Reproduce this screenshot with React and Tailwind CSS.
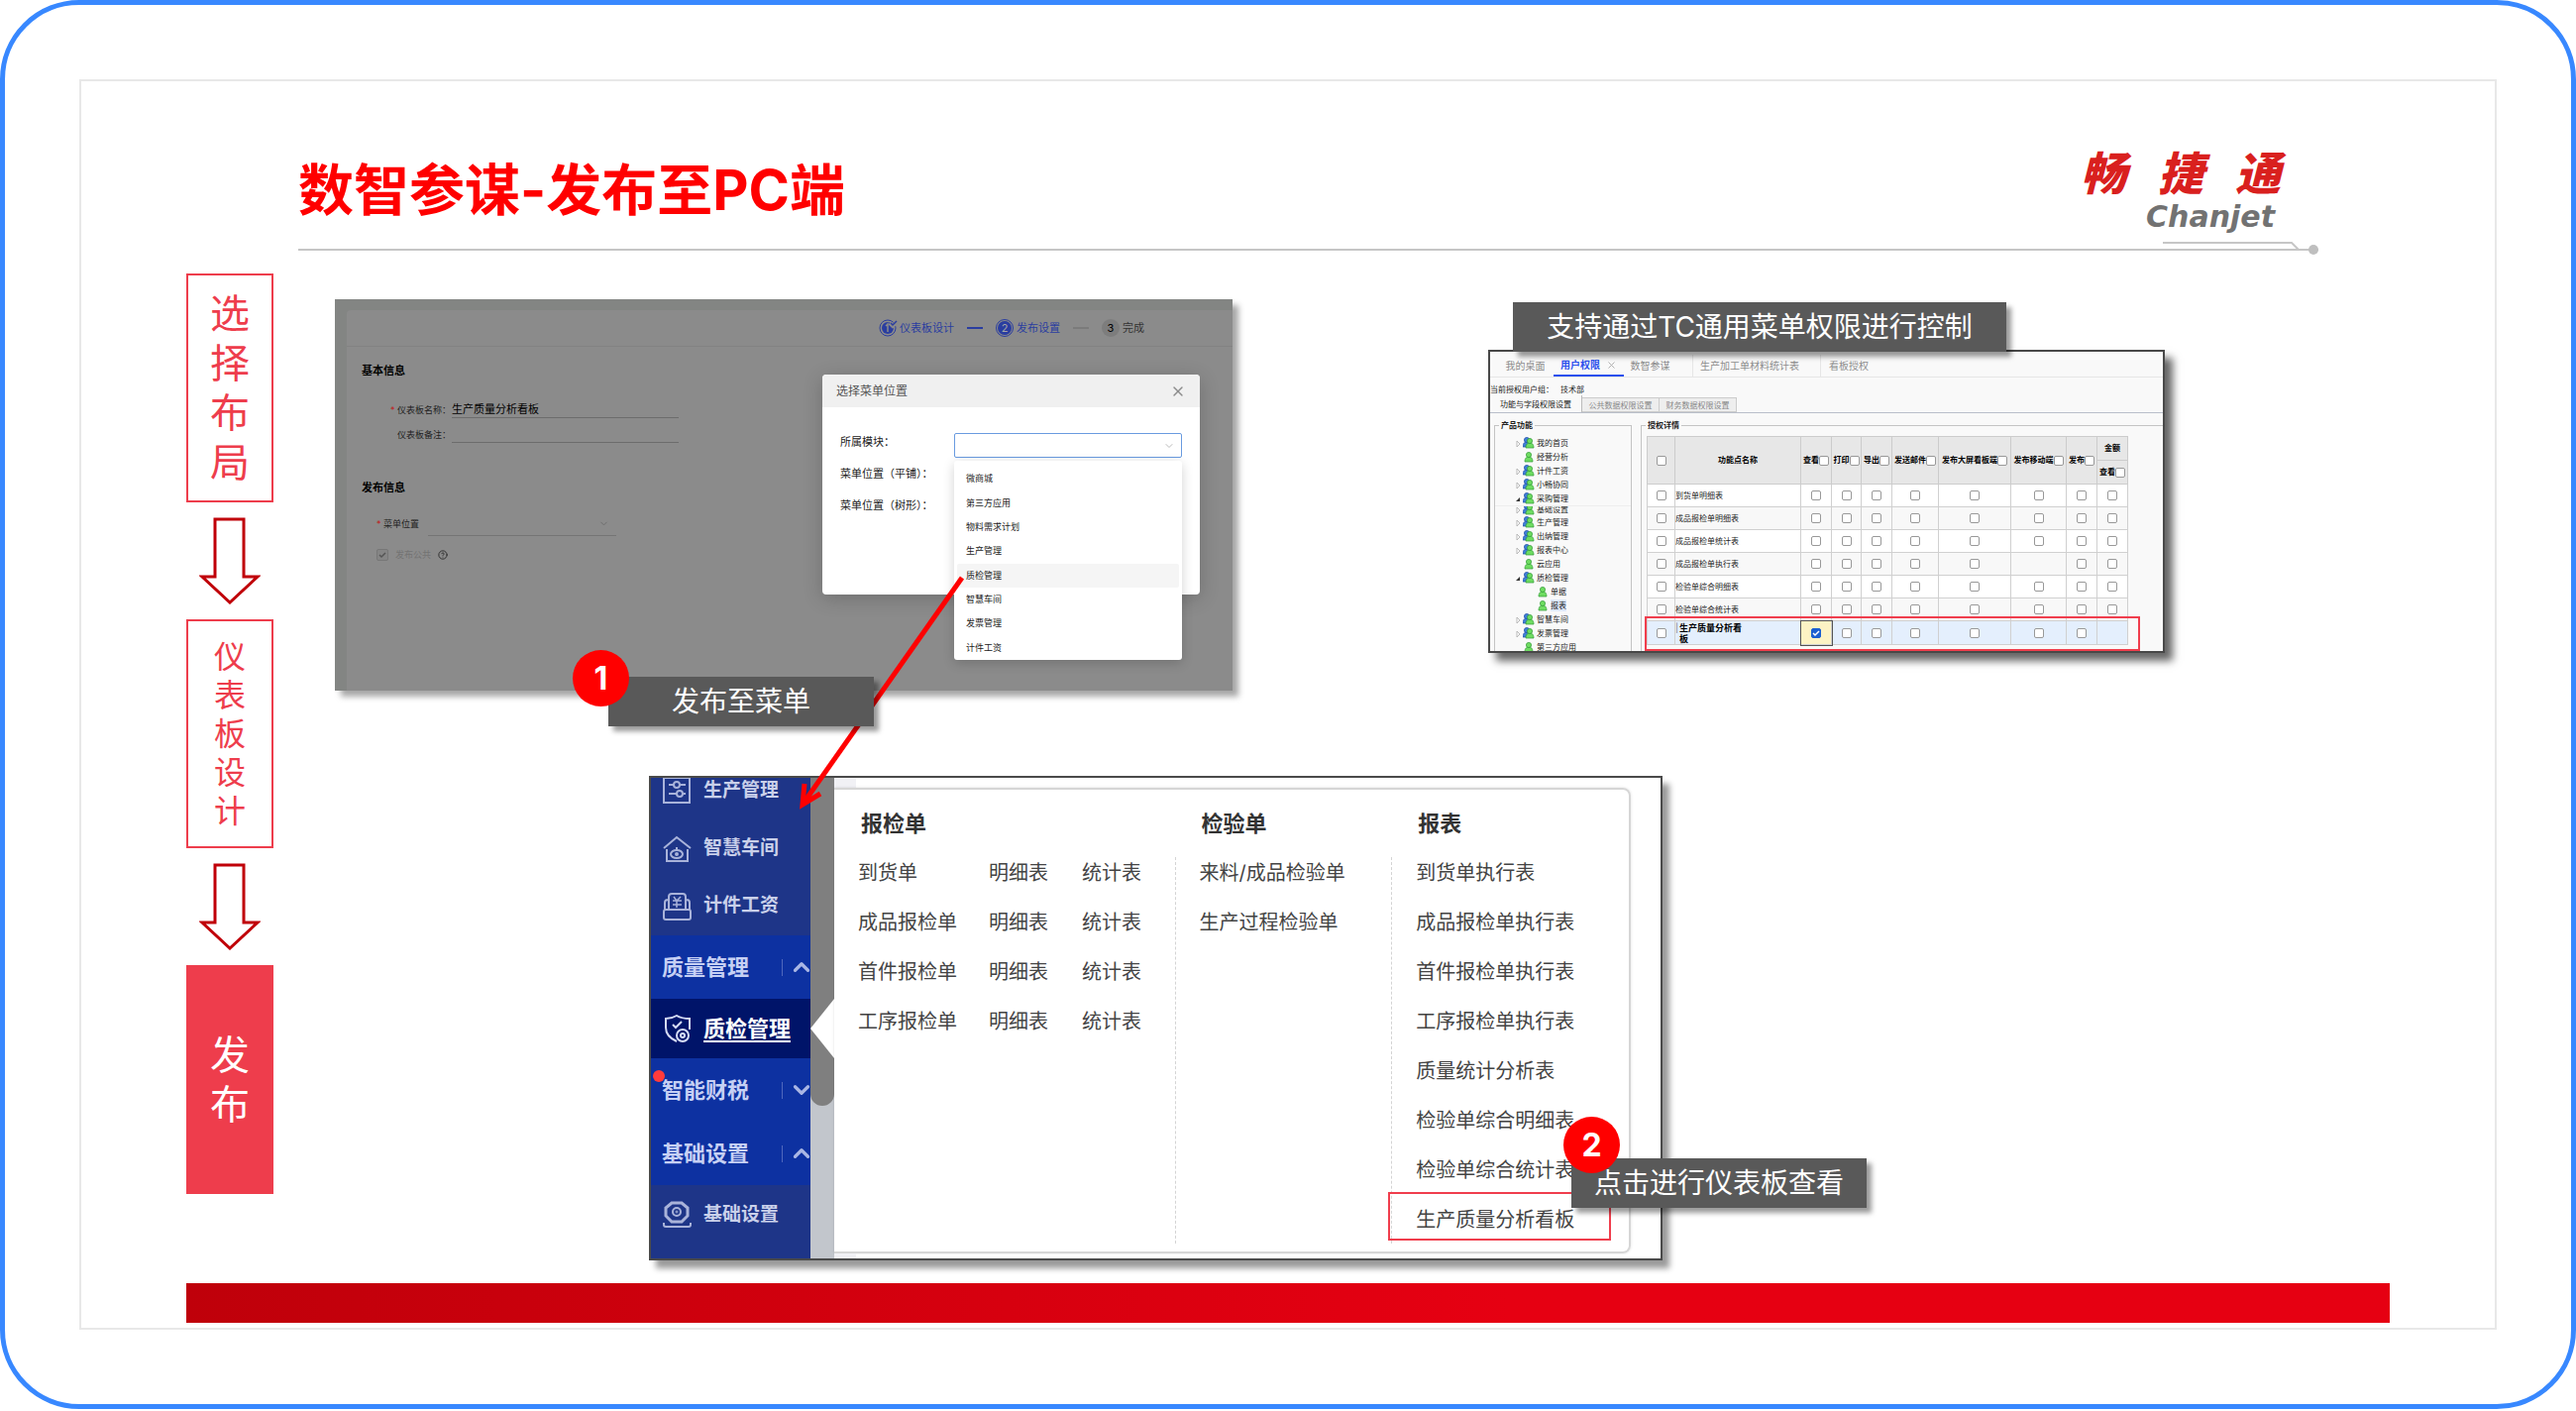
import { ChevronDown, ChevronUp, CircleHelp, X } from 'lucide-react';

const moduleOptions = ['微商城', '第三方应用', '物料需求计划', '生产管理', '质检管理', '智慧车间', '发票管理', '计件工资'];

const treeTop = [
    { label: '我的首页', kind: 'group' },
    { label: '经营分析', kind: 'leaf' },
    { label: '计件工资', kind: 'group' },
    { label: '小畅协同', kind: 'group' },
    { label: '采购管理', kind: 'open' },
];

const treeBottom = [
    { label: '生产管理', kind: 'group' },
    { label: '出纳管理', kind: 'group' },
    { label: '报表中心', kind: 'group' },
    { label: '云应用', kind: 'leaf' },
    { label: '质检管理', kind: 'open' },
    { label: '单据', kind: 'child' },
    { label: '报表', kind: 'child', selected: true },
    { label: '智慧车间', kind: 'group' },
    { label: '发票管理', kind: 'group' },
    { label: '第三方应用', kind: 'leaf' },
];

const permissionColumns = ['查看', '打印', '导出', '发送邮件', '发布大屏看板端', '发布移动端', '发布'];

const permissionRows = [
    { name: '到货单明细表' },
    { name: '成品报检单明细表' },
    { name: '成品报检单统计表' },
    { name: '成品报检单执行表', missing: 5 },
    { name: '检验单综合明细表' },
    { name: '检验单综合统计表' },
];

const inspectionForms = ['到货单', '成品报检单', '首件报检单', '工序报检单'];
const checkForms = ['来料/成品检验单', '生产过程检验单'];
const reports = [
    '到货单执行表',
    '成品报检单执行表',
    '首件报检单执行表',
    '工序报检单执行表',
    '质量统计分析表',
    '检验单综合明细表',
    '检验单综合统计表',
    '生产质量分析看板',
];

function Logo() {
    return (
        <div className="flex flex-col items-end">
            <div className="flex gap-[32px] text-[46px] leading-[54px] font-black text-[#d9201e] italic">
                <span>畅</span>
                <span>捷</span>
                <span>通</span>
            </div>
            <div className="mr-[6px] font-['DejaVu_Sans',sans-serif] text-[30px] leading-[34px] font-bold text-[#727272] italic">
                Chanjet
            </div>
        </div>
    );
}

function Header() {
    return (
        <header className="mr-[72px] ml-[113px] pt-[66px]">
            <div className="flex h-[103px] items-start justify-between">
                <h1 className="mt-[14px] text-[56px] leading-[60px] font-bold text-[#ff0000]">数智参谋-发布至PC端</h1>
                <div className="mr-[38px]">
                    <Logo />
                </div>
            </div>
            <div className="relative h-[2px] bg-[#c6c6c6]">
                <svg className="absolute right-0 -bottom-[4px]" width="160" height="14" viewBox="0 0 160 14" fill="none">
                    <path d="M3 2H133L140 9" stroke="#c6c6c6" strokeWidth="2" />
                    <circle cx="155" cy="9" r="5" fill="#bfbfbf" />
                </svg>
            </div>
        </header>
    );
}

function StepArrow() {
    return (
        <svg className="my-[15px] h-[88px] w-[62px] self-center" viewBox="0 0 62 88" fill="none">
            <path d="M16 2H45V60H59L31 86L3 60H16Z" stroke="#c00008" strokeWidth="3" />
        </svg>
    );
}

function StepBox({ text, className }) {
    return (
        <div className={`flex h-[231px] flex-col items-center justify-center ${className}`}>
            {text.split('').map((ch) => (
                <span key={ch}>{ch}</span>
            ))}
        </div>
    );
}

function Steps() {
    return (
        <nav className="flex w-[88px] shrink-0 flex-col" aria-label="步骤">
            <StepBox text="选择布局" className="border-2 border-[#ee3d4c] text-[40px] leading-[50px] text-[#ee3d4c]" />
            <StepArrow />
            <StepBox text="仪表板设计" className="border-2 border-[#ee3d4c] text-[32px] leading-[39px] text-[#ee3d4c]" />
            <StepArrow />
            <StepBox text="发布" className="bg-[#ee3d4c] text-[40px] leading-[50px] text-white" />
        </nav>
    );
}

function Callout({ children, className }) {
    return (
        <div
            className={`absolute z-20 flex h-[50px] items-center justify-center bg-[#595959] text-[28px] leading-[40px] whitespace-nowrap text-white shadow-[5px_5px_5px_rgba(0,0,0,0.4)] ${className}`}>
            {children}
        </div>
    );
}

function Badge({ number, className }) {
    return (
        <span
            className={`absolute flex h-[57px] w-[57px] items-center justify-center rounded-full bg-[#ff0000] text-[32px] font-bold ${className}`}>
            {number}
        </span>
    );
}

function ModulePicker() {
    return (
        <div className="absolute top-[76px] left-[492px] h-[222px] w-[381px] rounded-[4px] bg-white text-[11px] leading-[16px] text-[#222] shadow-[0_4px_20px_rgba(0,0,0,0.2)]">
            <div className="flex h-[33px] items-center justify-between rounded-t-[4px] bg-[#f0f0f0] px-[14px]">
                <h3 className="text-[12px] text-[#555]">选择菜单位置</h3>
                <button type="button" aria-label="关闭" className="text-[#8a8a8a]">
                    <X size={16} strokeWidth={2} />
                </button>
            </div>
            <div className="flex flex-col gap-4 px-[18px] pt-[27px]">
                <label htmlFor="module">所属模块：</label>
                <span>菜单位置（平铺）：</span>
                <span>菜单位置（树形）：</span>
            </div>
            <div className="absolute top-[59px] left-[133px] w-[230px]">
                <select
                    id="module"
                    className="block h-[25px] w-full appearance-none rounded-[2px] border border-[#6a9be0] bg-white outline-none"
                />
                <ChevronDown size={12} strokeWidth={2} className="absolute top-[7px] right-[7px] text-[#bbb]" />
                <ul className="mt-[3px] flex h-[201px] flex-col rounded-[3px] bg-white px-[3px] pt-[6px] text-[9px] shadow-[0_3px_12px_rgba(0,0,0,0.18)]">
                    {moduleOptions.map((option) => (
                        <li
                            key={option}
                            className={`flex flex-1 items-center rounded-[2px] px-[9px] ${option === '质检管理' ? 'bg-[#f5f5f5]' : ''}`}>
                            {option}
                        </li>
                    ))}
                </ul>
            </div>
        </div>
    );
}

function PublishPanel() {
    return (
        <section className="relative h-[395px]">
            <div className="h-full bg-[#838583] pt-[11px] pl-[12px] shadow-[6px_6px_6px_rgba(0,0,0,0.35)]">
                <div className="h-full rounded-tl-[4px] bg-[#8b8b8b] text-[9px] text-[#222]">
                    <ol className="flex h-[37px] items-center border-b border-[#828282] pl-[537px] text-[11px] text-[#2a3da0]">
                        <li className="flex items-center gap-px">
                            <svg width="20" height="18" viewBox="0 0 20 18" fill="none">
                                <circle cx="9" cy="9" r="8" stroke="#2a3da0" />
                                <circle cx="9" cy="9" r="6" fill="#2a3da0" />
                                <path d="M7 7L9 5V13" stroke="#8b8b8b" strokeWidth="1.5" />
                                <path d="M11 4L14 7L19 2" stroke="#8b8b8b" strokeWidth="4" />
                                <path d="M12 4L14 6L18 2" stroke="#2a3da0" strokeWidth="1.5" />
                            </svg>
                            仪表板设计
                        </li>
                        <li aria-hidden="true" className="mx-[13px] h-[2px] w-[16px] bg-[#2a3da0]" />
                        <li className="flex items-center gap-[3px]">
                            <span className="flex h-[18px] w-[18px] items-center justify-center rounded-full border border-[#2a3da0] p-px">
                                <span className="flex h-full w-full items-center justify-center rounded-full bg-[#2a3da0] text-[#a5a5a5]">2</span>
                            </span>
                            发布设置
                        </li>
                        <li aria-hidden="true" className="mx-[13px] h-[2px] w-[16px] bg-[#7b7b7b]" />
                        <li className="flex items-center gap-[3px] text-[#333]">
                            <span className="flex h-[18px] w-[18px] items-center justify-center rounded-full bg-[#7d7d7d] text-black">3</span>
                            完成
                        </li>
                    </ol>

                    <h2 className="mt-[16px] ml-[15px] text-[11px] leading-[16px] font-bold text-black">基本信息</h2>
                    <div className="mt-[21px] flex h-[19px] items-center">
                        <label htmlFor="board-name" className="w-[106px] pt-[2px] pr-[1px] text-right">
                            <span className="text-[#c01818]">* </span>仪表板名称：
                        </label>
                        <input
                            id="board-name"
                            type="text"
                            defaultValue="生产质量分析看板"
                            className="h-full w-[229px] border-b border-[#6c6c6c] bg-transparent text-[11px] text-black outline-none"
                        />
                    </div>
                    <div className="mt-[6px] flex h-[19px] items-center">
                        <label htmlFor="board-note" className="w-[106px] pt-[2px] pr-[1px] text-right">
                            仪表板备注：
                        </label>
                        <input
                            id="board-note"
                            type="text"
                            className="h-full w-[229px] border-b border-[#6c6c6c] bg-transparent text-[11px] outline-none"
                        />
                    </div>

                    <h2 className="mt-[37px] ml-[15px] text-[11px] leading-[16px] font-bold text-black">发布信息</h2>
                    <div className="mt-[16px] ml-[30px] flex h-[25px] items-center">
                        <label htmlFor="menu-place" className="w-[52px]">
                            <span className="text-[#c01818]">* </span>菜单位置
                        </label>
                        <div className="relative h-full w-[190px]">
                            <select id="menu-place" className="h-full w-full appearance-none border-b border-[#757575] outline-none" />
                            <ChevronDown size={11} className="absolute top-[7px] right-[7px] text-[#6c6c6c]" />
                        </div>
                    </div>
                    <div className="mt-[11px] ml-[30px] flex h-[16px] items-center gap-[7px] text-[#737373]">
                        <span className="relative flex">
                            <input
                                id="publish-public"
                                type="checkbox"
                                defaultChecked
                                disabled
                                className="h-[12px] w-[12px] appearance-none rounded-[2px] border border-[#777] bg-[#858585]"
                            />
                            <svg className="absolute inset-0" width="12" height="12" viewBox="0 0 12 12" fill="none">
                                <path d="M3 6L5 8L9 4" stroke="#555" strokeWidth="1.5" />
                            </svg>
                        </span>
                        <label htmlFor="publish-public">发布公共</label>
                        <CircleHelp size={10} strokeWidth={2} className="text-[#222]" />
                    </div>
                </div>
            </div>
            <ModulePicker />
            <Callout className="top-[381px] left-[276px] w-[268px]">
                <Badge number="1" className="-top-[27px] -left-[36px]" />
                发布至菜单
            </Callout>
        </section>
    );
}

function Person({ x, y, fill, edge }) {
    return (
        <g fill={fill} stroke={edge} strokeWidth="0.7">
            <path d={`M${x} ${y + 10}C${x} ${y + 6} ${x + 2} ${y + 5} ${x + 4} ${y + 5}S${x + 8} ${y + 6} ${x + 8} ${y + 10}Z`} />
            <circle cx={x + 4} cy={y + 3} r="2.6" />
        </g>
    );
}

function TreeRow({ label, kind, selected, className = 'h-[14px]' }) {
    const pair = kind === 'group' || kind === 'open';
    return (
        <li className={`flex items-center ${className} ${kind === 'child' ? 'pl-[35px]' : 'pl-[21px]'}`}>
            <svg width="7" height="12" viewBox="0 0 7 12" className="shrink-0">
                {kind === 'group' && <path d="M1 4L4 7L1 10Z" fill="#fff" stroke="#aaa" strokeWidth="0.8" />}
                {kind === 'open' && <path d="M4 5V9H0Z" fill="#333" />}
            </svg>
            <svg width="12" height="12" viewBox="0 0 12 12" className="mr-[2px] shrink-0">
                {pair && <Person x={0} y={0} fill="#3f7fd8" edge="#1f4fa5" />}
                <Person x={pair ? 3 : 2} y={1} fill="#6fdc62" edge="#2f9a35" />
            </svg>
            <span className={selected ? 'bg-[#dfe9fa]' : ''}>{label}</span>
        </li>
    );
}

function Tick({ label, checked }) {
    return (
        <span className="relative inline-flex align-middle">
            <input
                type="checkbox"
                aria-label={label}
                defaultChecked={checked}
                className="h-[10px] w-[10px] appearance-none rounded-[2px] border border-[#999] bg-white checked:border-[#1b5fd0] checked:bg-[#1b5fd0]"
            />
            {checked && (
                <svg className="absolute inset-0" width="10" height="10" viewBox="0 0 10 10" fill="none">
                    <path d="M2 5L4 7L8 3" stroke="#fff" strokeWidth="1.5" />
                </svg>
            )}
        </span>
    );
}

function PermissionTable() {
    return (
        <table className="w-[485px] table-fixed border-collapse text-center leading-[11px] [&_td]:border [&_td]:border-[#d0d0d0] [&_th]:border [&_th]:border-[#ccc] [&_th]:p-0 [&_th]:whitespace-nowrap">
            <colgroup>
                <col className="w-[28px]" />
                <col className="w-[127px]" />
                <col className="w-[31px]" />
                <col className="w-[30px]" />
                <col className="w-[31px]" />
                <col className="w-[47px]" />
                <col className="w-[73px]" />
                <col className="w-[56px]" />
                <col className="w-[31px]" />
                <col className="w-[31px]" />
            </colgroup>
            <thead className="bg-[#e7e7e7] text-black">
                <tr className="h-[24px]">
                    <th rowSpan={2}><Tick label="全选" /></th>
                    <th rowSpan={2}>功能点名称</th>
                    {permissionColumns.map((name) => (
                        <th key={name} rowSpan={2}>
                            {name}
                            <Tick label={name} />
                        </th>
                    ))}
                    <th>金额</th>
                </tr>
                <tr className="h-[24px]">
                    <th>查看<Tick label="金额查看" /></th>
                </tr>
            </thead>
            <tbody>
                {permissionRows.map((row) => (
                    <tr key={row.name} className="h-[23px] bg-white even:bg-[#f8f8f8]">
                        <td><Tick label={row.name} /></td>
                        <td className="text-left">{row.name}</td>
                        {permissionColumns.map((name, i) => (
                            <td key={name}>{row.missing !== i && <Tick label={`${row.name} ${name}`} />}</td>
                        ))}
                        <td><Tick label={`${row.name} 金额`} /></td>
                    </tr>
                ))}
                <tr className="h-[24px] bg-[#e4effd]">
                    <td><Tick label="生产质量分析看板" /></td>
                    <td className="text-left text-[9px] font-bold text-black">
                        <div className="flex h-[22px] items-start gap-px">
                            <span className="font-normal text-[#777]">|</span>
                            <span className="w-[68px]">生产质量分析看板</span>
                        </div>
                    </td>
                    {permissionColumns.map((name, i) => (
                        <td key={name} className={i === 0 ? 'bg-[#fdf3c4] outline outline-[#555]' : ''}>
                            <Tick label={`看板 ${name}`} checked={i === 0} />
                        </td>
                    ))}
                    <td />
                </tr>
            </tbody>
        </table>
    );
}

function PermissionPanel() {
    return (
        <section className="relative mt-[51px] h-[306px]">
            <div className="h-full overflow-hidden border-2 border-[#484848] bg-[#f9f9f9] text-[8px] leading-[12px] text-[#222] shadow-[8px_8px_8px_rgba(0,0,0,0.6)]">
                <div className="flex h-[26px] items-end border-b border-[#e6e6e6] text-[10px] text-[#8c8c8c]">
                    <button type="button" className="h-[22px] w-[64px] pl-[7px]">我的桌面</button>
                    <button
                        type="button"
                        className="flex h-[22px] w-[71px] items-center justify-between border-b-2 border-[#2b50ed] px-[7px] font-bold text-[#2b50ed]">
                        用户权限
                        <X size={11} className="text-[#aaa]" />
                    </button>
                    <button type="button" className="h-[22px] w-[70px] border-r border-[#e6e6e6] pr-[16px]">数智参谋</button>
                    <button type="button" className="h-[22px] w-[129px] border-r border-[#e6e6e6] pr-[14px]">生产加工单材料统计表</button>
                    <button type="button" className="h-[22px] pl-[8px]">看板授权</button>
                </div>
                <div className="mt-[4px] flex h-[15px] items-center gap-[7px]">
                    <span>当前授权用户组：</span>
                    <span>技术部</span>
                </div>
                <div className="flex h-[17px] items-end border-b border-[#b9bfca] text-[#888]">
                    <button type="button" className="h-[17px] w-[93px] border-r border-[#bbb] text-[#222]">功能与字段权限设置</button>
                    <button type="button" className="h-[15px] w-[78px] border border-l-0 border-[#ccc] bg-[#eee]">公共数据权限设置</button>
                    <button type="button" className="h-[15px] w-[78px] border border-l-0 border-[#ccc] bg-[#eee]">财务数据权限设置</button>
                </div>
                <div className="flex gap-[9px] pt-[6px] pl-[4px]">
                    <fieldset className="h-[260px] w-[139px] shrink-0 border border-[#c4c4c4]">
                        <legend className="ml-[4px] px-[2px] font-bold">产品功能</legend>
                        <ul className="pt-[5px]">
                            {treeTop.map((node) => (
                                <TreeRow key={node.label} {...node} />
                            ))}
                        </ul>
                        <ul className="border-t border-[#eee]">
                            <TreeRow label="基础设置" kind="group" className="h-[9px] items-end! overflow-hidden" />
                            {treeBottom.map((node) => (
                                <TreeRow key={node.label} {...node} />
                            ))}
                        </ul>
                    </fieldset>
                    <fieldset className="h-[260px] min-w-0 flex-1 border border-r-0 border-[#c4c4c4] pl-[5px]">
                        <legend className="-ml-px px-[2px] font-bold">授权详情</legend>
                        <div className="pt-[5px]">
                            <PermissionTable />
                        </div>
                    </fieldset>
                </div>
            </div>
            <div className="absolute top-[269px] left-[158px] h-[35px] w-[500px] border-2 border-[#f03e4d]" />
            <Callout className="-top-[48px] left-[25px] w-[498px]">支持通过TC通用菜单权限进行控制</Callout>
        </section>
    );
}

const navIcons = {
    sliders: (
        <>
            <rect x="1" y="1" width="26" height="25" />
            <path d="M6 8H11M17 8H23M6 17H14M20 17H23" />
            <circle cx="14" cy="8" r="3" />
            <circle cx="17" cy="17" r="3" />
        </>
    ),
    house: (
        <>
            <path d="M1 14L14 3L28 14M4 15V27H25V15" />
            <ellipse cx="14" cy="20" rx="6" ry="4" />
            <circle cx="14" cy="20" r="1" />
            <path d="M14 13V16" />
        </>
    ),
    wage: (
        <>
            <rect x="1" y="17" width="27" height="10" rx="2" />
            <path d="M2 17V10Q2 7 5 7M27 17V10Q27 7 24 7M6 17V4Q6 1 9 1H20Q23 1 23 4V17" />
            <path d="M11 4L14 8L18 4M10 8H19M10 12H19M14 8V15" strokeWidth="1.5" />
        </>
    ),
    shield: (
        <>
            <path d="M14 27Q3 22 3 13V4Q9 4 14 1Q19 4 27 4V15" />
            <path d="M10 10L13 13L19 7" />
            <circle cx="20" cy="21" r="6" />
            <circle cx="20" cy="21" r="2" />
        </>
    ),
    gear: (
        <>
            <path d="M9 2H19L25 7V15L19 21H9L3 15V7Z" strokeWidth="3" />
            <circle cx="14" cy="11" r="4" />
            <circle cx="14" cy="11" r="1" strokeWidth="1" />
            <path d="M1 22V24Q1 26 3 26H26Q28 26 28 24V22" />
        </>
    ),
};

function NavItem({ icon, label, className, active }) {
    return (
        <a href="#" className={`flex items-center gap-3 pl-[12px] ${className}`}>
            <svg width="29" height="28" viewBox="0 0 29 28" fill="none" stroke={active ? '#d5dcf5' : '#a9b3da'} strokeWidth="2" className="shrink-0">
                {navIcons[icon]}
            </svg>
            <span className={active ? 'text-[22px] font-bold whitespace-nowrap text-white underline underline-offset-4' : 'text-[19px] font-bold text-[#c9d0ea]'}>
                {label}
            </span>
        </a>
    );
}

function NavGroup({ label, open, dot }) {
    const Chevron = open ? ChevronUp : ChevronDown;
    return (
        <button type="button" className="relative flex h-[64px] w-full items-center bg-[#0d31a1] pl-[11px] text-[22px] font-bold text-[#c6d0f4]">
            {dot && <span className="absolute top-[12px] left-[2px] h-[12px] w-[12px] rounded-full bg-[#ff3b3b]" />}
            {label}
            <span className="ml-auto h-[17px] w-px bg-[#5068bd]" />
            <Chevron size={26} strokeWidth={3} className="-mr-[4px] ml-[6px] text-[#a9b6e4]" />
        </button>
    );
}

function MenuColumn({ title, children, divided }) {
    return (
        <div className="flex min-w-0 flex-col whitespace-nowrap">
            <h3 className="flex h-[68px] shrink-0 items-center pl-[27px] text-[22px] font-bold text-[#333]">{title}</h3>
            <ul className={`mb-2 flex flex-1 flex-col gap-[18px] pl-6 ${divided ? 'border-l border-dashed border-[#d4d4d4]' : ''}`}>
                {children}
            </ul>
        </div>
    );
}

function MenuPanel() {
    return (
        <section className="relative h-[489px]">
            <div className="flex h-full overflow-hidden border-2 border-[#4a4a4a] bg-white shadow-[7px_8px_6px_rgba(0,0,0,0.4)]">
                <nav className="flex w-[161px] shrink-0 flex-col bg-[#1e3588]" aria-label="主菜单">
                    <NavItem icon="sliders" label="生产管理" className="h-[42px] pb-[16px]" />
                    <NavItem icon="house" label="智慧车间" className="h-[58px]" />
                    <NavItem icon="wage" label="计件工资" className="h-[59px]" />
                    <NavGroup label="质量管理" open />
                    <NavItem icon="shield" label="质检管理" className="h-[60px] bg-[#001469]" active />
                    <NavGroup label="智能财税" dot />
                    <NavGroup label="基础设置" open />
                    <NavItem icon="gear" label="基础设置" className="h-[60px]" />
                </nav>
                <div className="w-[24px] shrink-0 bg-[#c2c6cc]">
                    <div className="flex h-[331px] items-end rounded-b-full bg-[#7f7f7f]">
                        <svg className="mb-[48px]" width="24" height="60" viewBox="0 0 24 60">
                            <path d="M24 0L0 30L24 60Z" fill="#fff" />
                        </svg>
                    </div>
                </div>
                <div className="flex min-w-0 flex-1 flex-col pr-[30px]">
                    <div className="h-[10px] w-[22px] shrink-0 bg-[#f1f1f5]" />
                    <div className="grid flex-1 grid-cols-[344fr_219fr_240fr] rounded-r-[8px] border-2 border-l-0 border-[#d6d6d6] text-[20px] leading-[32px] text-[#444] shadow-[0_0_3px_rgba(0,0,0,0.12)]">
                        <MenuColumn title="报检单">
                            {inspectionForms.map((name) => (
                                <li key={name} className="grid grid-cols-[132px_94px_auto]">
                                    <a href="#">{name}</a>
                                    <a href="#">明细表</a>
                                    <a href="#">统计表</a>
                                </li>
                            ))}
                        </MenuColumn>
                        <MenuColumn title="检验单" divided>
                            {checkForms.map((name) => (
                                <li key={name}><a href="#">{name}</a></li>
                            ))}
                        </MenuColumn>
                        <MenuColumn title="报表" divided>
                            {reports.map((name) => (
                                <li key={name} className="relative">
                                    <a href="#">{name}</a>
                                    {name === '生产质量分析看板' && (
                                        <span className="absolute -top-[12px] -bottom-[5px] -left-[28px] w-[225px] border-2 border-[#f03e4d]" />
                                    )}
                                </li>
                            ))}
                        </MenuColumn>
                    </div>
                    <div className="h-[5px] w-[22px] shrink-0 bg-[#f1f1f5]" />
                </div>
            </div>
            <Callout className="top-[386px] -right-[206px] w-[298px]">
                <Badge number="2" className="-top-[42px] -left-[8px]" />
                点击进行仪表板查看
            </Callout>
        </section>
    );
}

export default function App() {
    return (
        <div className="flex min-h-screen flex-col bg-white pb-[2px] font-['Inter','Noto_Sans_CJK_SC',sans-serif]">
            <div className="flex flex-1 flex-col rounded-[80px] border-[5px] border-[#3888ff] p-[75px]">
                <main className="flex flex-1 flex-col border-2 border-[#e8e8e8] px-[106px] pb-[5px]">
                    <Header />
                    <div className="mt-[23px] flex">
                        <Steps />
                        <div className="relative ml-[62px] min-w-0 flex-1 pt-[26px]">
                            <div className="grid grid-cols-[906fr_258fr_683fr_227fr]">
                                <PublishPanel />
                                <span />
                                <PermissionPanel />
                            </div>
                            <div className="mt-[86px] grid grid-cols-[317fr_1023fr_734fr]">
                                <span />
                                <MenuPanel />
                            </div>
                            <svg
                                className="pointer-events-none absolute top-0 left-0 z-10"
                                width="700"
                                height="560"
                                viewBox="0 0 700 560"
                                fill="none"
                                stroke="#ff0000"
                                strokeWidth="5">
                                <path d="M633 307L474 533" />
                                <path d="M474 515L472 536L490 525" />
                            </svg>
                        </div>
                    </div>
                    <div className="mt-auto h-[40px] bg-linear-to-r from-[#bf000a] to-[#e60012] to-60%" />
                </main>
            </div>
        </div>
    );
}
